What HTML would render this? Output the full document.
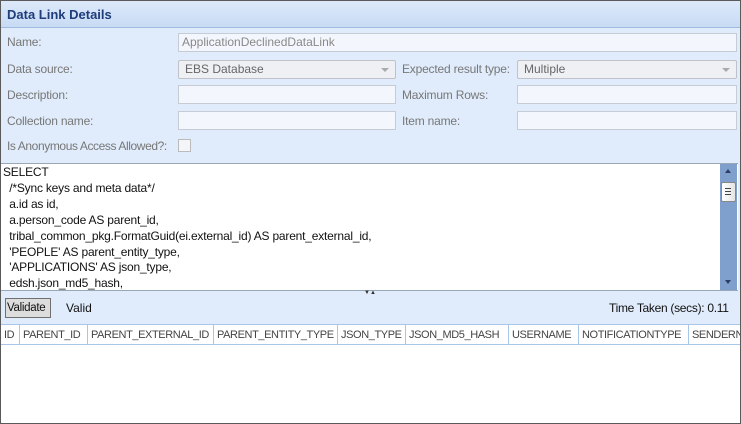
<!DOCTYPE html>
<html><head><style>
*{margin:0;padding:0;box-sizing:border-box}
body{width:741px;height:424px;overflow:hidden;background:#fff;font-family:"Liberation Sans",sans-serif;font-size:12px;position:relative}
.a{position:absolute;white-space:nowrap}
#frame{left:0;top:0;width:741px;height:424px;border:1px solid #5a5a5a;background:#e0ecfb}
#title{left:1px;top:1px;width:739px;height:27px;background:linear-gradient(#dde9fa,#c8dbf4);border-bottom:1px solid #9fbbe0}
#title span{position:absolute;left:6px;top:6px;font-weight:bold;font-size:13px;color:#1e3d7a}
.lbl{color:#777;font-size:12px;letter-spacing:-0.2px}
.in{background:#f3f7fd;border:1px solid #c5ccd6;height:19px}
.dd{background:#eef0f3;border:1px solid #bfc3c9;border-radius:2px;height:19px;color:#666;padding:1px 6px}
.dd:after{content:"";position:absolute;right:6px;top:7px;border:4px solid transparent;border-top:4px solid #aaa}
.hd{color:#444;font-size:11px;letter-spacing:-0.4px;padding:4px 3px;border-right:1px solid #a9c6ea;height:20px;top:325px;overflow:hidden}
</style></head><body>
<div id="frame" class="a"></div>
<div id="title" class="a"><span>Data Link Details</span></div>
<div class="a lbl" style="left:7px;top:35px">Name:</div>
<div class="a in" style="left:178px;top:33px;width:559px;color:#888;padding:1px 3px">ApplicationDeclinedDataLink</div>
<div class="a lbl" style="left:7px;top:62px">Data source:</div>
<div class="a dd" style="left:178px;top:60px;width:218px">EBS Database</div>
<div class="a lbl" style="left:402px;top:62px">Expected result type:</div>
<div class="a dd" style="left:517px;top:60px;width:220px">Multiple</div>
<div class="a lbl" style="left:7px;top:88px">Description:</div>
<div class="a in" style="left:178px;top:85px;width:218px"></div>
<div class="a lbl" style="left:402px;top:88px">Maximum Rows:</div>
<div class="a in" style="left:517px;top:85px;width:220px"></div>
<div class="a lbl" style="left:7px;top:114px">Collection name:</div>
<div class="a in" style="left:178px;top:111px;width:218px"></div>
<div class="a lbl" style="left:402px;top:114px">Item name:</div>
<div class="a in" style="left:517px;top:111px;width:220px"></div>
<div class="a lbl" style="left:7px;top:139px;letter-spacing:-0.4px">Is Anonymous Access Allowed?:</div>
<div class="a" style="left:178px;top:139px;width:13px;height:13px;border:1px solid #bbb;background:#f3f5f8"></div>
<div class="a" style="left:1px;top:163px;width:737px;height:128px;background:#fff;border-top:1px solid #9aa7b8;border-bottom:1px solid #9aa7b8"></div>
<div class="a" style="left:3px;top:165px;line-height:15.9px;color:#111;font-size:12px;letter-spacing:-0.2px;white-space:pre">SELECT
  /*Sync keys and meta data*/
  a.id as id,
  a.person_code AS parent_id,
  tribal_common_pkg.FormatGuid(ei.external_id) AS parent_external_id,
  'PEOPLE' AS parent_entity_type,
  'APPLICATIONS' AS json_type,
  edsh.json_md5_hash,</div>
<div class="a" style="left:720px;top:164px;width:17px;height:126px;background:#7f9fcc"></div>
<div class="a" style="left:725px;top:169px;border:3px solid transparent;border-bottom:4px solid #2c3e66;border-top:0"></div>
<div class="a" style="left:725px;top:280px;border:3px solid transparent;border-top:4px solid #2c3e66;border-bottom:0"></div>
<div class="a" style="left:721px;top:182px;width:15px;height:20px;background:linear-gradient(90deg,#fff,#e4e4e4);border:1px solid #888;border-radius:2px"></div>
<div class="a" style="left:725px;top:188px;width:6px;height:7px;border-top:1px solid #444;border-bottom:1px solid #444"></div>
<div class="a" style="left:725px;top:191px;width:6px;height:1px;background:#444"></div>
<div class="a" style="left:364px;top:290px;font-size:6px;color:#333">▼▲</div>
<div class="a" style="left:5px;top:298px;width:46px;height:20px;background:#ddd;border:1px solid #707070;padding:3px 1px;color:#111;font-size:11.5px;letter-spacing:-0.3px">Validate</div>
<div class="a" style="left:66px;top:301px;color:#111">Valid</div>
<div class="a" style="left:609px;top:301px;color:#111;letter-spacing:-0.3px">Time Taken (secs): 0.11</div>
<div class="a" style="left:1px;top:324px;width:739px;height:99px;background:#fff;border-top:1px solid #a9c6ea"></div>
<div class="a" style="left:1px;top:325px;width:739px;height:20px;background:#fff;border-bottom:1px solid #a9c6ea"></div>
<div class="a hd" style="left:1px;width:19px">ID</div>
<div class="a hd" style="left:20px;width:68px">PARENT_ID</div>
<div class="a hd" style="left:88px;width:126px">PARENT_EXTERNAL_ID</div>
<div class="a hd" style="left:214px;width:124px">PARENT_ENTITY_TYPE</div>
<div class="a hd" style="left:338px;width:68px">JSON_TYPE</div>
<div class="a hd" style="left:406px;width:103px">JSON_MD5_HASH</div>
<div class="a hd" style="left:509px;width:70px">USERNAME</div>
<div class="a hd" style="left:579px;width:110px">NOTIFICATIONTYPE</div>
<div class="a hd" style="left:689px;width:51px;border-right:0">SENDERNAME</div>
</body></html>
